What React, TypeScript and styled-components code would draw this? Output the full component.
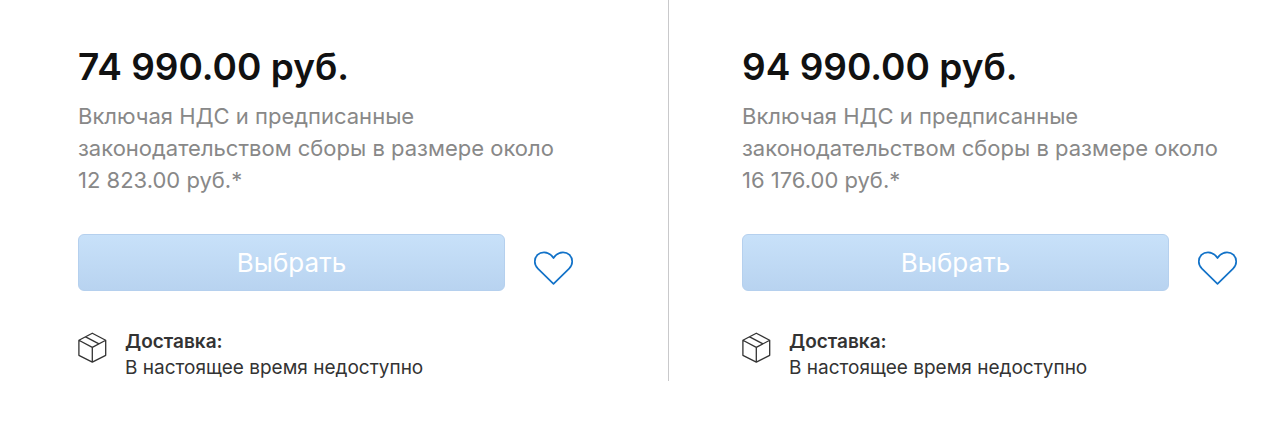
import React from 'react';
import styled, { createGlobalStyle } from 'styled-components';

const GlobalStyle = createGlobalStyle`
  * { box-sizing: border-box; }
  body {
    margin: 0;
    background: #fff;
    font-family: Inter, "Liberation Sans", sans-serif;
  }
`;

const Offers = styled.main`
  display: grid;
  grid-template-columns: 669fr 611fr;
`;

const Offer = styled.section<{ $divided?: boolean }>`
  padding: 44px 40px 0 ${p => (p.$divided ? 78 : 73)}px;
  border-right: ${p => (p.$divided ? '1px solid #c9c9cb' : '0')};
`;

const Price = styled.h2`
  margin: 0;
  font-size: 37px;
  line-height: 46px;
  font-weight: 600;
  color: #111;
  white-space: nowrap;
`;

const Tax = styled.p`
  margin: 10px 0 0;
  font-size: 22px;
  line-height: 32px;
  color: #888;
`;

const Line = styled.span`
  display: block;
  white-space: nowrap;
`;

const Actions = styled.div`
  display: flex;
  align-items: center;
  gap: 28px;
  margin-top: 38px;
`;

const SelectButton = styled.button`
  flex: 0 1 427px;
  height: 57px;
  padding: 0;
  border: 1px solid #b5d0ee;
  border-radius: 6px;
  background: linear-gradient(#c8e1f9, #b8d3f0);
  color: #fff;
  font: inherit;
  font-size: 26px;
`;

const FavoriteButton = styled.button`
  display: flex;
  padding: 8px 0 0;
  border: 0;
  background: none;
  color: #1272c8;
`;

const Delivery = styled.div`
  display: flex;
  gap: 18px;
  margin-top: 38px;
`;

const BoxIcon = styled.svg`
  flex: none;
  margin-top: 3px;
`;

const DeliveryText = styled.p`
  margin: 0;
  font-size: 19px;
  line-height: 26px;
  color: #333;
  white-space: nowrap;
`;

const Label = styled.strong`
  display: block;
  font-weight: 600;
`;

const offers = [
  { price: '74 990.00 руб.', tax: '12 823.00 руб.*' },
  { price: '94 990.00 руб.', tax: '16 176.00 руб.*' },
];

export default function App() {
  return (
    <>
      <GlobalStyle />
      <Offers>
        {offers.map((o, i) => (
          <Offer key={o.price} $divided={i === 0}>
            <Price>{o.price}</Price>
            <Tax>
              <Line>Включая НДС и предписанные</Line>
              <Line>законодательством сборы в размере около</Line>
              <Line>{o.tax}</Line>
            </Tax>
            <Actions>
              <SelectButton type="button">Выбрать</SelectButton>
              <FavoriteButton type="button" aria-label="Добавить в избранное">
                <svg width="41" height="36" viewBox="0 0 41 36" fill="none" stroke="currentColor" strokeWidth="1.7" strokeLinejoin="round">
                  <path d="M20.500 34.800 4.900 19.700C2.800 17.600 1.800 15.200 1.800 12.600 1.800 7.200 5.800 3.300 11 3.300c3.900 0 7 2 9.500 5.700 2.500-3.700 5.600-5.700 9.500-5.700 5.200 0 9.200 3.900 9.200 9.300 0 2.600-1 5-3.100 7.100Z" />
                </svg>
              </FavoriteButton>
            </Actions>
            <Delivery>
              <BoxIcon width="29" height="31" viewBox="0 0 29 31" fill="none" stroke="#333" strokeWidth="1.300" strokeLinejoin="round">
                <path d="M14.300 1.200 27.700 8.300v15L14.300 30.100.9 23.300v-15ZM.9 8.300l13.400 7.100 13.400-7.100M14.300 15.400v14.700M7.600 4.800l13.400 7" />
              </BoxIcon>
              <DeliveryText>
                <Label>Доставка:</Label>
                В настоящее время недоступно
              </DeliveryText>
            </Delivery>
          </Offer>
        ))}
      </Offers>
    </>
  );
}
